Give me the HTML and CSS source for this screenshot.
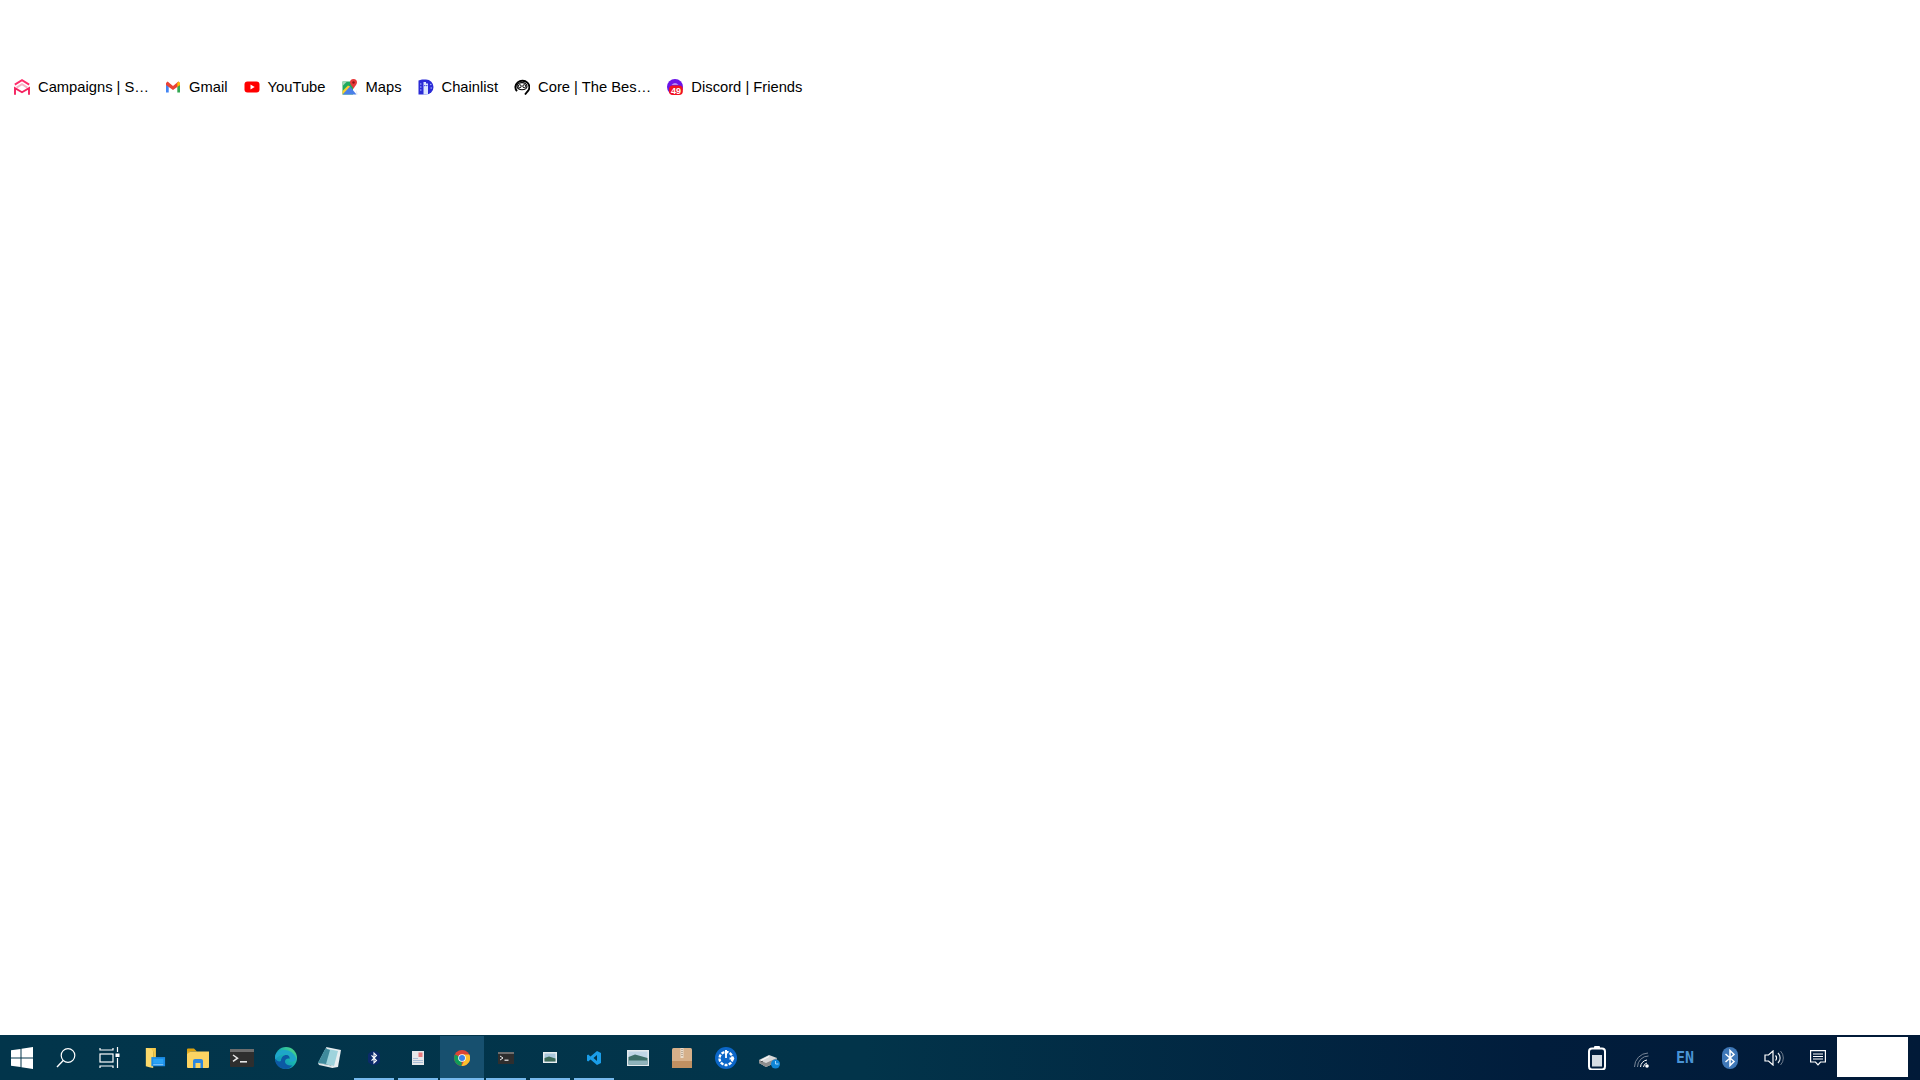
FILE: index.html
```html
<!DOCTYPE html>
<html lang="en">
<head>
<meta charset="utf-8">
<title>New Tab</title>
<link rel="stylesheet" href="styles.css">
</head>
<body>
<nav class="bookmarks">
  <a class="bm"><svg class="fav" viewBox="0 0 16 16"><g fill="none"><path d="M.8 5.6 8 1.2 15.2 5.6" stroke="#ff2d6b" stroke-width="1.9"/><path d="M2.6 8.6 8 5.2 13.4 8.6" stroke="#f6b3c6" stroke-width="1.9"/><path d="M1 15.8V9.2L8 13.2 15 9.2V15.8" stroke="#f5215f" stroke-width="1.9"/></g></svg><span>Campaigns | S…</span></a>
  <a class="bm"><svg class="fav" viewBox="0 0 16 16"><path d="M1 4V13.5H3.7V7Z" fill="#4285f4"/><path d="M15 4V13.5H12.3V7Z" fill="#34a853"/><path d="M1 4 2.6 2.6 8 7 13.4 2.6 15 4 15 6 12.3 8 8 11 3.7 8 1 6Z" fill="#ea4335"/><path d="M12.3 4.2 13.4 2.6 15 4V6L12.3 8Z" fill="#fbbc04"/></svg><span>Gmail</span></a>
  <a class="bm"><svg class="fav" viewBox="0 0 16 16"><rect x="0.5" y="2.5" width="15" height="11" rx="3" fill="#f00"/><path d="M6.5 5.6 10.7 8 6.5 10.4Z" fill="#fff"/></svg><span>YouTube</span></a>
  <a class="bm"><svg class="fav" viewBox="0 0 16 16"><path d="M.5 2.5H11V15.5H.5Z" fill="#1faa60"/><path d="M.5 15.5 7.5 7 14.5 15.5Z" fill="#4a7fe8"/><path d="M.5 15.5V12L6 6.5 8 7.5Z" fill="#fbcf30"/><path d="M.5 2.5H5L.5 7Z" fill="#a5d8b8"/><path d="M11.5 0A3.5 3.5 0 0 1 15 3.5C15 5.8 12.7 7 11.5 10 10.3 7 8 5.8 8 3.5A3.5 3.5 0 0 1 11.5 0Z" fill="#e8383a"/><circle cx="11.5" cy="3.5" r="1.2" fill="#8a1515"/><path d="M11 15.5H14.5V10.5L15.5 15.5Z" fill="#d8dfee"/></svg><span>Maps</span></a>
  <a class="bm"><svg class="fav" viewBox="0 0 16 16"><path d="M.5 1.5 4 .5H8A7.5 7.5 0 0 1 8 15.5H.5Z" fill="#2b2bd6"/><path d="M5.5 3H8V4.5H10V15.5H5.5Z" fill="#dce6ff"/><circle cx="6.8" cy="6.6" r=".7" fill="#2b2bd6"/><circle cx="8.8" cy="6.6" r=".7" fill="#2b2bd6"/><circle cx="12.8" cy="5.5" r=".8" fill="#9fb0ff"/><circle cx="13.2" cy="9" r=".8" fill="#9fb0ff"/><circle cx="2.8" cy="5" r=".8" fill="#9fb0ff"/><circle cx="2.8" cy="8" r=".8" fill="#9fb0ff"/><circle cx="2.8" cy="11" r=".8" fill="#9fb0ff"/></svg><span>Chainlist</span></a>
  <a class="bm"><svg class="fav" viewBox="0 0 16 16"><g fill="none" stroke="#000"><path d="M3 12.2A7 6.4 0 1 1 13.5 12.5L11 15.5" stroke-width="1.9"/><ellipse cx="8" cy="7.2" rx="5" ry="3.6" stroke-width="1.1"/><circle cx="5.7" cy="7.2" r="1.5" stroke-width="1"/><circle cx="10.3" cy="7.2" r="1.5" stroke-width="1"/></g></svg><span>Core | The Bes…</span></a>
  <a class="bm"><svg class="fav" viewBox="0 0 16 16"><circle cx="8" cy="8" r="8" fill="#6a14e8"/><path d="M4.5 5.6C6.5 4 9.5 4 11.5 5.6Z" fill="#fff"/><rect x="2" y="6.4" width="13.8" height="9.6" rx="3.8" fill="#f01020"/><text x="8.9" y="14.7" class="badge">49</text></svg><span>Discord | Friends</span></a>
</nav>
<main class="page"></main>
<footer class="taskbar">
  <div class="apps">
    <div class="slot"><svg class="i22" viewBox="0 0 22 22"><path d="M0 3.3 9.5 2V10.5H0ZM10.5 1.8 22 0V10.5H10.5ZM0 11.5H9.5V20L0 18.7ZM10.5 11.5H22V22L10.5 20.2Z" fill="#fff"/></svg></div>
    <div class="slot"><svg class="i22" viewBox="0 0 22 22"><circle cx="13" cy="8.5" r="6.8" fill="none" stroke="#fff" stroke-width="1.2"/><path d="M8.2 13.5 2 20" stroke="#fff" stroke-width="1.4"/></svg></div>
    <div class="slot"><svg class="i22" viewBox="0 0 22 22"><g fill="none" stroke="#fff" stroke-width="1.2"><path d="M1 1V3H14V1M1 21V19H14V21"/><rect x="1" y="7" width="13" height="8"/><path d="M18.5 0V5M18.5 11V21"/></g><rect x="16.5" y="6.5" width="4" height="3.5" fill="#fff"/></svg></div>
    <div class="slot"><svg class="i22 nudge" viewBox="0 0 22 24"><path d="M1 1H7.5L9 4V23L5 22 1 21Z" fill="#fbd96b"/><path d="M4 1H12V19H9V5L7 2H4Z" fill="#f6c94a"/><rect x="7" y="11" width="15" height="10" fill="#1c8de6"/><rect x="9" y="13" width="11" height="5" fill="#2aa3f5"/><rect x="9" y="19" width="11" height=".8" fill="#bfe3ff"/></svg></div>
    <div class="slot"><svg class="i22" viewBox="0 0 22 20"><path d="M0 1.5A1 1 0 0 1 1 .5H7L10 3.5H0Z" fill="#dda20f"/><path d="M0 3.5H22V19A1 1 0 0 1 21 20H1A1 1 0 0 1 0 19Z" fill="#fcd462"/><path d="M4 3.5 0 6V3.5Z" fill="#e8b021"/><path d="M6 13A2 2 0 0 1 8 11H14A2 2 0 0 1 16 13V20H13.5V15H8.5V20H6Z" fill="#2c87e0"/></svg></div>
    <div class="slot"><svg class="i24" viewBox="0 0 24 18"><rect width="24" height="18" rx="1" fill="#2e2e2e"/><rect width="24" height="3" fill="#6e6e6e"/><path d="M3 6 7.5 9.2 3 12.4" fill="none" stroke="#e6e6e6" stroke-width="1.5"/><rect x="10" y="12" width="7" height="1.6" fill="#e6e6e6"/></svg></div>
    <div class="slot"><svg class="i22" viewBox="0 0 22 22"><defs><linearGradient id="eg" x1="0" y1="1" x2="1" y2="0"><stop offset="0" stop-color="#0f7bc4"/><stop offset=".55" stop-color="#17b3b0"/><stop offset="1" stop-color="#5fe07a"/></linearGradient></defs><circle cx="11" cy="11" r="11" fill="url(#eg)"/><path d="M0 11C0 5 5 3 9 3 14 3 20 6 21.5 12.5 20 15 16 15 14 14.5 17 11 14 7.5 10.5 7.5 5 7.5 2 10 0 13Z" fill="#1ea6c9"/><path d="M6 14C6 10 9 8 11 8 14 8 15 10 14.5 12 13 11 10 12 10 14.5 10 17.5 14 19 17.5 18.5 15 21 13 22 11 22 5 22 0 18 0 11.5 2 14 4 15 6 14Z" fill="#0c59a4"/></svg></div>
    <div class="slot"><svg class="i24" viewBox="0 0 24 22"><path d="M8 0 23 3 20 20 14 21Z" fill="#e8eef0"/><path d="M7.5 1.5 20 4 16 19 0 16Z" fill="#9fd3dc"/><path d="M7.5 1.5 12 3 8 17 0 16Z" fill="#3f8a9c"/><path d="M0 16 16 19 14.5 21 1 18Z" fill="#dfe6e8"/></svg></div>
    <div class="slot run"><svg class="i12" viewBox="0 0 12 14"><circle cx="6" cy="7" r="7" fill="#0b2a6b"/><path d="M3.5 4.3 8.5 9.5 6 12V2L8.5 4.5 3.5 9.7" fill="none" stroke="#fff" stroke-width="1.1"/></svg></div>
    <div class="slot run"><svg class="i12" viewBox="0 0 12 14"><rect width="12" height="14" fill="#e6e8ea"/><rect x="6.5" y="1.5" width="4" height="4.5" fill="#e8797c"/><path d="M1 7.5H6M1 9.5H11M1 11.5H11" stroke="#a9bed8"/></svg></div>
    <div class="slot active"><svg class="i16" viewBox="0 0 16 16"><circle cx="8" cy="8" r="8" fill="#db4437"/><path d="M8 8 1 4.4 A8 8 0 0 0 7.5 16Z" fill="#0f9d58"/><path d="M8 4.5H15.3A8 8 0 0 1 7.5 16L11 9Z" fill="#fbc02d"/><circle cx="8" cy="8" r="3.8" fill="#fff"/><circle cx="8" cy="8" r="3" fill="#3b82e8"/></svg></div>
    <div class="slot run"><svg class="i16" viewBox="0 0 16 12"><rect width="16" height="12" fill="#2e2e2e"/><rect width="16" height="2" fill="#6e6e6e"/><path d="M2 4 5 6 2 8" fill="none" stroke="#eee"/><rect x="6.5" y="7.6" width="4" height="1.2" fill="#eee"/></svg></div>
    <div class="slot run"><svg class="i14" viewBox="0 0 14 11"><rect width="14" height="11" fill="#e8eef0"/><rect x="1.5" y="1.5" width="11" height="8" fill="#a9c7dc"/><path d="M1.5 6 6 4.5 12.5 6.5V9.5H1.5Z" fill="#3d6b58"/></svg></div>
    <div class="slot run"><svg class="i14b" viewBox="0 0 14 14"><path d="M10 0 14 2V12L10 14 3.5 8.5 1.2 10.5 0 9.8V4.2L1.2 3.5 3.5 5.5ZM10 4 6.5 7 10 10Z" fill="#1a9de8"/></svg></div>
    <div class="slot"><svg class="i22w" viewBox="0 0 22 16"><rect width="22" height="16" fill="#e4eaee"/><rect x="1.5" y="1.5" width="19" height="13" fill="#c0d6e6"/><path d="M1.5 7 8 4.5 20.5 8V14.5H1.5Z" fill="#3d6e68"/><path d="M1.5 10.5H20.5V14.5H1.5Z" fill="#8fb3bc"/></svg></div>
    <div class="slot"><svg class="i20" viewBox="0 0 20 20"><rect width="20" height="20" rx="1.5" fill="#d6b08a"/><rect y="13" width="20" height="7" fill="#bf9062"/><rect x="8.5" y="0" width="3" height="10" fill="#eadccb"/><path d="M10 1V9" stroke="#8c7a66" stroke-dasharray="1 1"/></svg></div>
    <div class="slot"><svg class="i22" viewBox="0 0 22 22"><circle cx="11" cy="11" r="11" fill="#0b66c8"/><circle cx="11" cy="11.5" r="6.5" fill="none" stroke="#fff" stroke-width="2.4" stroke-dasharray="3 1.2"/><path d="M11 3V11.5H19" fill="none" stroke="#fff" stroke-width="1.8"/><path d="M16.5 8.5 19.5 11.5 16.5 14.5" fill="#fff"/><circle cx="11" cy="11.5" r="3.6" fill="#0b66c8"/><path d="M11 3V11" stroke="#fff" stroke-width="1.8"/></svg></div>
    <div class="slot"><svg class="i22 low" viewBox="0 0 22 16"><path d="M0 7 10 2 18 5V9L7 14 0 10Z" fill="#d8d8d8"/><path d="M0 7 7 10 18 5V9L7 14 0 10Z" fill="#8e8e8e"/><circle cx="3" cy="8.5" r=".7" fill="#333"/><path d="M2 7.5 10 3.5" stroke="#fff"/><circle cx="16.5" cy="11" r="4.5" fill="#0f86d6"/><path d="M16.5 8V11H19.5" fill="none" stroke="#9ed6ff"/></svg></div>
  </div>
  <div class="tray">
    <div class="slot"><svg class="i18" viewBox="0 0 18 24"><rect x="6" y="0" width="6" height="3" rx="1" fill="#fff"/><rect x="1" y="2.5" width="16" height="21" rx="3" fill="none" stroke="#fff" stroke-width="2"/><rect x="4" y="9" width="10" height="11.5" fill="#d6dde4"/></svg></div>
    <div class="slot shift"><svg class="i16t" viewBox="0 0 16 16"><g fill="none" stroke="#7a8798"><path d="M0.5 15A14 14 0 0 1 14 1"/><path d="M3.5 15A11 11 0 0 1 14.5 4"/></g><path d="M6.5 15A7.5 7.5 0 0 1 13 8" fill="none" stroke="#fff"/><path d="M9.5 15A4.5 4.5 0 0 1 13 11" fill="none" stroke="#fff"/><circle cx="13" cy="14" r="1.8" fill="#fff"/></svg></div>
    <div class="slot"><span class="lang">EN</span></div>
    <div class="slot shift"><svg class="i16b" viewBox="0 0 16 22"><rect width="16" height="22" rx="8" fill="#3f78b8"/><path d="M3.5 7 12 14.5 8 18.5V3.5L12 7.5 3.5 15" fill="none" stroke="#fff" stroke-width="1.5"/></svg></div>
    <div class="slot shift"><svg class="i20t" viewBox="0 0 20 16"><path d="M1 5H4.5L9 1V15L4.5 11H1Z" fill="none" stroke="#fff" stroke-width="1.2"/><path d="M11.5 5.5A3.5 3.5 0 0 1 11.5 10.5" fill="none" stroke="#fff" stroke-width="1.2"/><path d="M14 3A7 7 0 0 1 14 13" fill="none" stroke="#dfe5ea" stroke-width="1.2"/><path d="M16.5 1A10 10 0 0 1 16.5 15" fill="none" stroke="#6f7c8c"/></svg></div>
    <div class="slot shift"><svg class="i16m" viewBox="0 0 16 16"><path d="M.6.6H15.4V12H10.5L8 14.8 5.5 12H.6Z" fill="none" stroke="#fff" stroke-width="1.2"/><path d="M3 4H13M3 6.5H13M3 9H13" stroke="#fff"/></svg></div>
    <div class="clock"></div>
  </div>
</footer>
</body>
</html>
```

FILE: styles.css
```css
html, body {
  margin: 0;
  height: 100%;
}
body {
  display: flex;
  flex-direction: column;
  height: 1080px;
  overflow: hidden;
  background: #fff;
  font-family: "Liberation Sans", Arial, sans-serif;
}
.bookmarks {
  display: flex;
  align-items: center;
  height: 30px;
  margin-top: 72px;
  padding-left: 6px;
  color: #000;
  font-size: 14.74px;
}
.bm {
  display: flex;
  align-items: center;
  gap: 8px;
  padding: 0 8px;
  white-space: nowrap;
}
.bm span {
  line-height: 28px;
  margin-bottom: 1px;
}
.fav {
  width: 16px;
  height: 16px;
  flex: none;
}
.badge {
  font-size: 9px;
  font-weight: 700;
  font-family: "Liberation Sans", sans-serif;
  fill: #fff;
  text-anchor: middle;
}
.page {
  flex: 1;
}
.taskbar {
  display: flex;
  justify-content: space-between;
  height: 45px;
  flex: none;
  background: linear-gradient(90deg, #02354b 0%, #02344a 45%, #011d3c 80%, #011a38 100%);
}
.apps, .tray {
  display: flex;
  align-items: stretch;
}
.tray {
  padding-right: 12px;
}
.slot {
  box-sizing: border-box;
  position: relative;
  width: 44px;
  display: flex;
  align-items: center;
  justify-content: center;
}
.shift {
  padding-left: 2px;
}
.nudge {
  margin-left: 2px;
}
.run::after, .active::after {
  content: "";
  position: absolute;
  left: 2px;
  right: 2px;
  bottom: 0;
  height: 2px;
  background: #76b9ed;
}
.active {
  background: #17506f;
  margin-top: 1px;
}
.active::after {
  left: 0;
  right: 0;
}
.low {
  margin-top: 6px;
}
.i22 { width: 22px; height: 22px; }
.i24 { width: 24px; height: 22px; }
.i20 { width: 20px; height: 20px; }
.i12 { width: 12px; height: 14px; }
.i16 { width: 16px; height: 16px; }
.i14 { width: 14px; height: 11px; }
.i14b { width: 14px; height: 14px; }
.i22w { width: 22px; height: 16px; }
.i18 { width: 18px; height: 24px; }
.i16t { width: 16px; height: 16px; margin-top: 4px; }
.i16b { width: 16px; height: 22px; }
.i20t { width: 20px; height: 16px; }
.i16m { width: 16px; height: 16px; }
.slot .i22.low { height: 16px; }
.lang {
  font-family: "DejaVu Sans Mono", monospace;
  font-size: 15px;
  font-weight: 700;
  color: #4a94d6;
}
.clock {
  width: 71px;
  height: 40px;
  margin: 2px 0 0 -2px;
  background: #fff;
}
```
